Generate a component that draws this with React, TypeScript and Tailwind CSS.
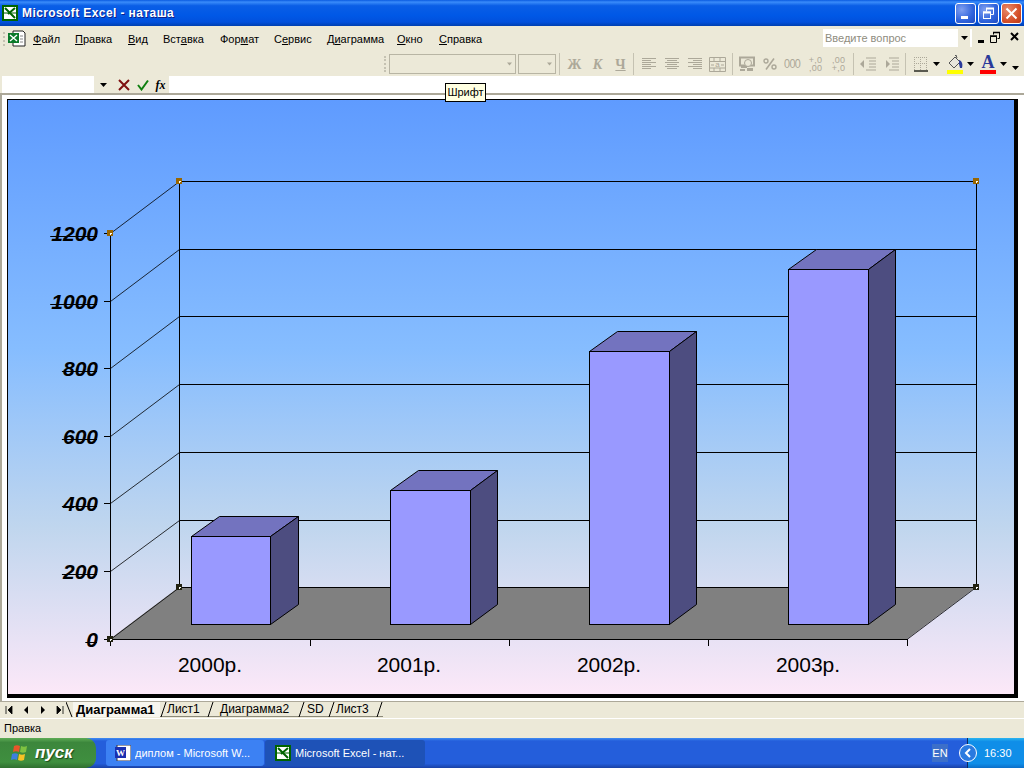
import React from "react";

const menuItems: [string, string, string, number][] = [
  ["", "Ф", "айл", 42],
  ["", "П", "равка", 53],
  ["", "В", "ид", 35],
  ["Вст", "а", "вка", 57],
  ["Фор", "м", "ат", 54],
  ["С", "е", "рвис", 53],
  ["Д", "и", "аграмма", 70],
  ["", "О", "кно", 42],
  ["", "С", "правка", 50],
];

const G = "#aca899";

const Arrow = ({ color = "#000", w = 7 }: { color?: string; w?: number }) => (
  <svg width={w} height="4" viewBox="0 0 7 4" className="shrink-0">
    <path d="M0 0h7L3.5 4z" fill={color} />
  </svg>
);

const Sep = ({ w = 7 }: { w?: number }) => (
  <div className="flex h-[24px] justify-center items-center shrink-0" style={{ width: w }}>
    <div className="w-px h-[22px] bg-[#c5c2b2]" />
  </div>
);

const Lines = ({ rows }: { rows: [number, number][] }) => (
  <svg width="16" height="14" viewBox="0 0 16 14">
    {rows.map(([a, b], i) => (
      <rect key={i} x={a} y={1 + i * 2} width={b - a} height="1" fill={G} />
    ))}
  </svg>
);

const Btn = ({ children }: { children: React.ReactNode }) => (
  <div className="flex w-[23px] h-[24px] items-center justify-center shrink-0">{children}</div>
);

const Chart = () => {
  const backY = [181, 249, 316, 384, 452, 520, 587];
  const leftY = [233, 301, 368, 436, 503, 571, 639];
  const labels = ["1200", "1000", "800", "600", "400", "200", "0"];
  const bars = [
    { x: 191, y: 536, w: 79, label: "2000р.", lx: 210 },
    { x: 390, y: 490, w: 80, label: "2001р.", lx: 409 },
    { x: 589, y: 351, w: 80, label: "2002р.", lx: 609 },
    { x: 788, y: 269, w: 80, label: "2003р.", lx: 808 },
  ];
  return (
    <svg width="1006" height="594" viewBox="8 100 1006 594" className="block">
      <defs>
        <linearGradient id="sky" x1="0" y1="0" x2="0" y2="1">
          <stop offset="0" stopColor="#5f9bff" />
          <stop offset="0.42" stopColor="#86bdff" />
          <stop offset="0.72" stopColor="#c0d6ee" />
          <stop offset="1" stopColor="#fce8f8" />
        </linearGradient>
      </defs>
      <rect x="8" y="100" width="1006" height="594" fill="url(#sky)" />
      <polygon points="110,639 179,587 976,587 907,639" fill="#808080" />
      <g stroke="#000" strokeWidth="1" shapeRendering="crispEdges">
        {backY.map((y) => (
          <line key={y} x1="179" y1={y + 0.5} x2="976" y2={y + 0.5} />
        ))}
        <line x1="179.5" y1="181" x2="179.5" y2="587" />
        <line x1="976.5" y1="181" x2="976.5" y2="587" />
        <line x1="110.5" y1="233" x2="110.5" y2="646" />
        <line x1="110" y1="639.5" x2="907" y2="639.5" />
        {[310, 509, 708, 907].map((x) => (
          <line key={x} x1={x + 0.5} y1="639" x2={x + 0.5} y2="646" />
        ))}
        {leftY.map((y) => (
          <line key={y} x1="104" y1={y + 0.5} x2="110" y2={y + 0.5} />
        ))}
      </g>
      <g stroke="#000" strokeWidth="0.8">
        {leftY.map((y, i) => (
          <line key={y} x1="110.5" y1={y + 0.5} x2="179.5" y2={backY[i] + 0.5} />
        ))}
        <line x1="907" y1="639.5" x2="976" y2="587.5" />
      </g>
      {bars.map((b) => (
        <g key={b.x} stroke="#000" strokeWidth="1">
          <polygon
            points={`${b.x + 0.5},${b.y + 0.5} ${b.x + 28.5},${b.y - 19.5} ${b.x + 107.5},${b.y - 19.5} ${b.x + b.w + 0.5},${b.y + 0.5}`}
            fill="#7373bf"
          />
          <polygon
            points={`${b.x + b.w + 0.5},${b.y + 0.5} ${b.x + 107.5},${b.y - 19.5} ${b.x + 107.5},604.5 ${b.x + b.w + 0.5},624.5`}
            fill="#4d4d80"
          />
          <rect x={b.x + 0.5} y={b.y + 0.5} width={b.w} height={624 - b.y} fill="#9999ff" />
        </g>
      ))}
      {leftY.map((y, i) => (
        <g key={y}>
          <text
            x="98"
            y={y + 8}
            textAnchor="end"
            fontFamily="'Liberation Sans', sans-serif"
            fontWeight="700"
            fontStyle="italic"
            fontSize="21"
            fill="#000"
          >
            {labels[i]}
          </text>
          <line
            x1={97 - labels[i].length * 11.7}
            y1={y + 3.5}
            x2="97"
            y2={y + 3.5}
            stroke="#000"
            strokeWidth="1"
          />
        </g>
      ))}
      {bars.map((b) => (
        <text
          key={b.label}
          x={b.lx}
          y="672"
          textAnchor="middle"
          fontFamily="'Liberation Sans', sans-serif"
          fontSize="21"
          fill="#000"
        >
          {b.label}
        </text>
      ))}
      {[[179, 181], [976, 181], [110, 233]].map(([x, y]) => (
        <g key={`${x}-${y}`}>
          <rect x={x - 3} y={y - 3} width="6" height="6" fill="#996600" />
          <rect x={x} y={y} width="2" height="1" fill="#fff" />
          <rect x={x} y={y} width="1" height="2" fill="#fff" />
        </g>
      ))}
      {[[179, 587], [976, 587], [110, 639]].map(([x, y]) => (
        <g key={`${x}-${y}`}>
          <rect x={x - 3} y={y - 3} width="6" height="6" fill="#222211" />
          <rect x={x} y={y} width="2" height="1" fill="#fff" />
          <rect x={x} y={y} width="1" height="2" fill="#fff" />
        </g>
      ))}
    </svg>
  );
};

const ExcelIcon = ({ s = 16 }: { s?: number }) => (
  <svg width={s} height={s} viewBox="0 0 16 16" className="shrink-0">
    <rect width="16" height="16" fill="#006400" />
    <rect x="2" y="2" width="12" height="12" fill="#fff" />
    <path d="M3 3l10 10M13 3L6 9" stroke="#006400" strokeWidth="2" />
    <path d="M2 8h12" stroke="#006400" strokeWidth="1" />
  </svg>
);

const WinBtn = ({ kind }: { kind: "min" | "max" | "close" }) => (
  <div
    className={`w-[21px] h-[21px] rounded-[3px] border border-white flex items-center justify-center ${
      kind === "close"
        ? "bg-[radial-gradient(circle_at_30%_30%,#e88a6c,#d5502a_60%,#b93a18)]"
        : "bg-[radial-gradient(circle_at_30%_30%,#7f9ff0,#2f63dc_60%,#1f4bc0)]"
    }`}
  >
    <svg width="15" height="15" viewBox="0 0 15 15">
      {kind === "min" && <rect x="3" y="10" width="7" height="3" fill="#fff" />}
      {kind === "max" && (
        <g fill="none" stroke="#fff">
          <path d="M5.5 5.5V2.5h7v6h-3" strokeWidth="1" />
          <path d="M5 2.5h8" strokeWidth="2" />
          <rect x="2.5" y="6" width="7" height="6.5" />
          <path d="M2 6.5h8" strokeWidth="2" />
        </g>
      )}
      {kind === "close" && <path d="M2.5 2.5l10 10M12.5 2.5l-10 10" stroke="#fff" strokeWidth="2" />}
    </svg>
  </div>
);

const Slant = ({ back = false, line = true }: { back?: boolean; line?: boolean }) => (
  <svg width="7" height="16" viewBox="0 0 7 16" className="shrink-0 block">
    {line && <rect y="14" width="7" height="1" fill="#8a8878" />}
    <path d={back ? "M0 0L6 15" : "M6 0L1 15"} stroke="#000" strokeWidth="1" />
  </svg>
);

const sheetTabs: [string, number, boolean, number][] = [
  ["Диаграмма1", 87, true, 3],
  ["Лист1", 40, false, 0],
  ["Диаграмма2", 84, false, 6],
  ["SD", 23, false, 2],
  ["Лист3", 41, false, 1],
];

export default function App() {
  return (
    <div className="w-[1024px] h-[768px] overflow-hidden relative flex flex-col bg-[#ece9d8] font-['Liberation_Sans',sans-serif] text-[11px] text-black">
      {/* title bar */}
      <div className="h-[26px] shrink-0 flex items-center pl-[2px] pr-[2px] bg-[linear-gradient(180deg,#0a5be0_0%,#3a8cfa_8%,#0a5ee6_22%,#0058e6_60%,#0250dc_85%,#0040b0_100%)]">
        <ExcelIcon s={16} />
        <span className="ml-[4px] font-bold text-[12px] tracking-[0.4px] text-white [text-shadow:1px_1px_0_#0f1f8a]">
          Microsoft Excel - наташа
        </span>
        <div className="ml-auto flex gap-[2px]">
          <WinBtn kind="min" />
          <WinBtn kind="max" />
          <WinBtn kind="close" />
        </div>
      </div>

      {/* menu bar */}
      <div className="h-[26px] shrink-0 flex items-center relative">
        <div className="ml-[3px] w-[2px] h-[14px] border-l-2 border-dotted border-[#c5c2b2]" />
        <svg width="18" height="18" viewBox="0 0 18 18" className="ml-[3px] shrink-0">
          <path d="M5 1h10l2 2v13H5z" fill="#fff" stroke="#222" />
          <rect x="0" y="3" width="11" height="10" fill="#0a7a2a" />
          <path d="M2 5l7 6M9 5l-7 6" stroke="#fff" strokeWidth="1.4" />
          <path d="M12 6h3M12 9h3M12 12h3" stroke="#888" />
        </svg>
        <div className="ml-[7px] flex">
          {menuItems.map(([a, u, b, w]) => (
            <div key={a + u + b} className="shrink-0" style={{ width: w }}>
              {a}
              <span className="underline">{u}</span>
              {b}
            </div>
          ))}
        </div>
        <div className="absolute left-[823px] top-[3px] w-[149px] h-[18px] bg-white flex items-center pl-[2px] text-[#8f8d80]">
          Введите вопрос
          <div className="ml-auto mr-[2px] w-[12px] h-[18px] bg-[#ece9d8] flex items-center justify-center">
            <Arrow />
          </div>
        </div>
        <svg width="45" height="14" viewBox="0 0 45 14" className="absolute left-[978px] top-[5px]">
          <rect x="0" y="9" width="6" height="3" fill="#000" />
          <path d="M12.5 5.5h6v6h-6zM15.5 3.5V1.5h6v6h-2" fill="none" stroke="#000" />
          <path d="M12 5h7M15 1.5h7" stroke="#000" strokeWidth="1.5" />
          <path d="M33 2l7 7M40 2l-7 7" stroke="#000" strokeWidth="2" />
        </svg>
      </div>

      {/* format toolbar */}
      <div className="h-[24px] shrink-0 flex items-center pl-[384px]">
        <div className="w-[2px] h-[16px] mr-[3px] border-l-2 border-dotted border-[#c5c2b2]" />
        <div className="w-[127px] h-[20px] border border-[#b8b5a4] flex items-center justify-end pr-[3px] shrink-0">
          <Arrow color={G} w={5} />
        </div>
        <div className="ml-[2px] w-[38px] h-[20px] border border-[#b8b5a4] flex items-center justify-end pr-[3px] shrink-0">
          <Arrow color={G} w={5} />
        </div>
        <Sep w={7} />
        <div className="flex font-['Liberation_Serif',serif] font-bold text-[14px] text-[#aca899] w-[67px] shrink-0">
          <Btn>Ж</Btn>
          <Btn>
            <i>К</i>
          </Btn>
          <Btn>
            <span className="underline">Ч</span>
          </Btn>
        </div>
        <Sep w={7} />
        <Btn>
          <Lines rows={[[1, 15], [1, 10], [1, 15], [1, 10], [1, 15], [1, 10]]} />
        </Btn>
        <Btn>
          <Lines rows={[[1, 15], [3, 13], [1, 15], [3, 13], [1, 15], [3, 13]]} />
        </Btn>
        <Btn>
          <Lines rows={[[1, 15], [6, 15], [1, 15], [6, 15], [1, 15], [6, 15]]} />
        </Btn>
        <Btn>
          <svg width="17" height="15" viewBox="0 0 17 15">
            <path d="M.5.5h16v14H.5zM.5 4.5h16M.5 11h16M5 .5v4M11 .5v4M5 11v4M11 11v4" fill="none" stroke={G} />
            <path d="M2 8h3M15 8h-3" stroke={G} />
            <text x="8.5" y="10" textAnchor="middle" fontSize="8" fill={G} fontFamily="'Liberation Sans', sans-serif">
              a
            </text>
          </svg>
        </Btn>
        <Sep w={6} />
        <Btn>
          <svg width="16" height="16" viewBox="0 0 16 16">
            <rect x="1" y="1.5" width="14" height="8" fill="none" stroke={G} strokeWidth="2" />
            <circle cx="9" cy="7" r="3.5" fill="#ece9d8" stroke={G} />
            <path d="M2 10h6v2H2zM8 12h6v3H8zM1 13h5v2H1z" fill={G} />
          </svg>
        </Btn>
        <Btn>
          <svg width="14" height="12" viewBox="0 0 14 12">
            <path d="M11 0.5L3 11.5" stroke={G} strokeWidth="1.6" fill="none" />
            <circle cx="3" cy="3" r="2" stroke={G} strokeWidth="1.4" fill="none" />
            <circle cx="11" cy="9" r="2" stroke={G} strokeWidth="1.4" fill="none" />
          </svg>
        </Btn>
        <Btn>
          <span className="text-[12px] tracking-[-0.6px] text-[#aca899] scale-x-90">000</span>
        </Btn>
        <Btn>
          <div className="text-[9px] leading-[8px] tracking-[0.3px] text-[#aca899] text-right">
            <div>+,0</div>
            <div>,00</div>
          </div>
        </Btn>
        <Btn>
          <div className="text-[9px] leading-[8px] tracking-[0.3px] text-[#aca899] text-right">
            <div>,00</div>
            <div>+,0</div>
          </div>
        </Btn>
        <Sep w={6} />
        <Btn>
          <svg width="16" height="14" viewBox="0 0 16 14">
            <path d="M6 1h10M9 4h7M9 7h7M9 10h7M6 13h10" stroke={G} />
            <path d="M0 7l4-4v8z" fill={G} />
          </svg>
        </Btn>
        <Btn>
          <svg width="16" height="14" viewBox="0 0 16 14">
            <path d="M6 1h10M9 4h7M9 7h7M9 10h7M6 13h10" stroke={G} />
            <path d="M7 7l-4-4v8z" fill={G} />
          </svg>
        </Btn>
        <Sep w={6} />
        <svg width="14" height="15" viewBox="0 0 14 15" className="ml-[6px] shrink-0" shapeRendering="crispEdges">
          <path
            d="M0 .5h13M0 6.5h13M.5 0v13M6.5 0v13M12.5 0v13"
            fill="none"
            stroke={G}
            strokeDasharray="1 1"
          />
          <rect y="13" width="14" height="2" fill="#5a5a50" />
        </svg>
        <div className="ml-[5px]">
          <Arrow />
        </div>
        <svg width="16" height="19" viewBox="0 0 16 19" className="ml-[7px] shrink-0">
          <path d="M2 8l6-6 5 5-6 6z" fill="#e8e6dc" stroke="#555" />
          <path d="M8 1l1-1 1 3" fill="none" stroke="#555" />
          <path d="M12 5c3 1 4 4 3 8h-2l-1-4z" fill="#2a3a9a" />
          <rect y="15" width="16" height="4" fill="#ffff00" />
        </svg>
        <div className="ml-[4px]">
          <Arrow />
        </div>
        <div className="ml-[6px] w-[16px] shrink-0 flex flex-col items-center">
          <span className="font-['Liberation_Serif',serif] font-bold text-[18px] leading-[15px] text-[#2a3a9a]">A</span>
          <div className="w-full h-[4px] bg-[#ff0000]" />
        </div>
        <div className="ml-[4px]">
          <Arrow />
        </div>
        <div className="ml-[5px] mt-[8px]">
          <Arrow />
        </div>
      </div>

      {/* formula bar */}
      <div className="h-[17px] shrink-0 flex">
        <div className="ml-[2px] w-[92px] bg-white" />
        <div className="w-[19px] flex items-center justify-center">
          <Arrow />
        </div>
        <div className="w-[22px] flex items-center justify-center">
          <svg width="12" height="12" viewBox="0 0 12 12">
            <path d="M1 1l10 10M11 1L1 11" stroke="#7f1010" strokeWidth="2" />
          </svg>
        </div>
        <div className="w-[15px] flex items-center justify-center">
          <svg width="12" height="12" viewBox="0 0 12 12">
            <path d="M1 6l3.5 4.5L11 1.5" fill="none" stroke="#108010" strokeWidth="2" />
          </svg>
        </div>
        <div className="w-[19px] pl-[2px] flex items-center justify-center font-['Liberation_Serif',serif] italic font-bold text-[12px]">
          fx
        </div>
        <div className="flex-1 bg-white" />
      </div>

      {/* sheet area */}
      <div className="h-[608px] shrink-0 bg-white border-t-2 border-t-[#aca899] border-l-2 border-l-[#aca899] pl-[5px] pt-[4px]">
        <div className="w-[1011px] h-[599px] border-t-[1px] border-l-[1px] border-black border-r-[4px] border-b-[4px]">
          <Chart />
        </div>
      </div>

      {/* sheet tabs */}
      <div className="h-[17px] shrink-0 flex items-start border-t border-t-[#aca899] text-[12px] leading-[15px]">
        <div className="flex items-center h-[15px] w-[66px] pl-[5px] gap-[9px] shrink-0">
          <svg width="8" height="8" viewBox="0 0 8 8"><path d="M1 0v8M7 0L3 4l4 4z" fill="#000" stroke="#000" strokeWidth="0.8" /></svg>
          <svg width="8" height="8" viewBox="0 0 8 8"><path d="M6 0L2 4l4 4z" fill="#000" /></svg>
          <svg width="8" height="8" viewBox="0 0 8 8"><path d="M2 0l4 4-4 4z" fill="#000" /></svg>
          <svg width="8" height="8" viewBox="0 0 8 8"><path d="M7 0v8M1 0l4 4-4 4z" fill="#000" stroke="#000" strokeWidth="0.8" /></svg>
        </div>
        <Slant back line={false} />
        {sheetTabs.map(([name, w, active, pad]) => (
          <React.Fragment key={name}>
            <div
              className={`shrink-0 h-[15px] ${active ? "font-bold text-[13px] bg-[#f7f6ef]" : "border-b border-b-[#8a8878]"}`}
              style={{ width: w, paddingLeft: pad }}
            >
              {name}
            </div>
            <Slant />
          </React.Fragment>
        ))}
      </div>

      {/* status bar */}
      <div className="h-[20px] shrink-0 flex items-center pl-[4px] border-t border-t-white">Правка</div>

      {/* taskbar */}
      <div className="h-[30px] shrink-0 flex items-stretch bg-[linear-gradient(180deg,#3f8cf3_0%,#245edb_10%,#245edb_85%,#1941a5_100%)] text-white">
        <div className="w-[96px] shrink-0 rounded-r-[10px] flex items-center pl-[10px] gap-[5px] bg-[linear-gradient(180deg,#5eac56_0%,#3c873c_15%,#3f8f3f_80%,#2f6f2f_100%)]">
          <svg width="20" height="20" viewBox="0 0 20 20" className="shrink-0">
            <path d="M4 3c2-1 4-1 6 0l-1 6c-2-1-4-1-6 0z" fill="#e8562a" />
            <path d="M11 3c2 1 4 1 6 0l-1 6c-2 1-4 1-6 0z" fill="#7fc241" />
            <path d="M2 11c2-1 4-1 6 0l-1 6c-2-1-4-1-6 0z" fill="#3d7fe0" />
            <path d="M9 11c2 1 4 1 6 0l-1 6c-2 1-4 1-6 0z" fill="#f7c325" />
          </svg>
          <span className="font-bold italic text-[17px] [text-shadow:1px_1px_1px_#1a4a1a]">пуск</span>
        </div>
        <div className="ml-[10px] w-[158px] my-[2px] rounded-[3px] bg-[#3c81f3] flex items-center pl-[9px] gap-[4px] shrink-0">
          <svg width="16" height="16" viewBox="0 0 16 16" className="shrink-0">
            <rect x="2" width="14" height="16" fill="#fff" stroke="#334" />
            <rect y="2" width="11" height="11" fill="#1a2fb0" />
            <text x="5.5" y="11" textAnchor="middle" fontSize="9" fontWeight="700" fill="#fff" fontFamily="'Liberation Serif', serif">W</text>
          </svg>
          <span className="truncate">диплом - Microsoft W...</span>
        </div>
        <div className="ml-[1px] w-[160px] my-[2px] rounded-[3px] bg-[#1e52b7] flex items-center pl-[10px] gap-[4px] shrink-0">
          <ExcelIcon s={16} />
          <span className="truncate">Microsoft Excel - нат...</span>
        </div>
        <div className="ml-auto mr-[19px] self-center w-[16px] h-[18px] bg-[#3c6fc9] text-center leading-[18px]">EN</div>
        <div className="w-[57px] shrink-0 flex items-center border-l border-l-[#10295e] bg-[linear-gradient(180deg,#2bb5f0_0%,#0f8ee8_12%,#0f8ee8_85%,#0b6ec8_100%)]">
          <div className="w-[18px] h-[18px] -ml-[9px] rounded-full border border-white bg-[#2a7ae0] flex items-center justify-center shrink-0">
            <svg width="10" height="10" viewBox="0 0 10 10">
              <path d="M7 1L3 5l4 4" fill="none" stroke="#fff" strokeWidth="2" />
            </svg>
          </div>
          <span className="ml-[7px]">16:30</span>
        </div>
      </div>

      {/* tooltip */}
      <div className="absolute left-[445px] top-[83px] w-[41px] h-[19px] bg-[#ffffe1] border border-black text-center leading-[17px]">
        Шрифт
      </div>
    </div>
  );
}
